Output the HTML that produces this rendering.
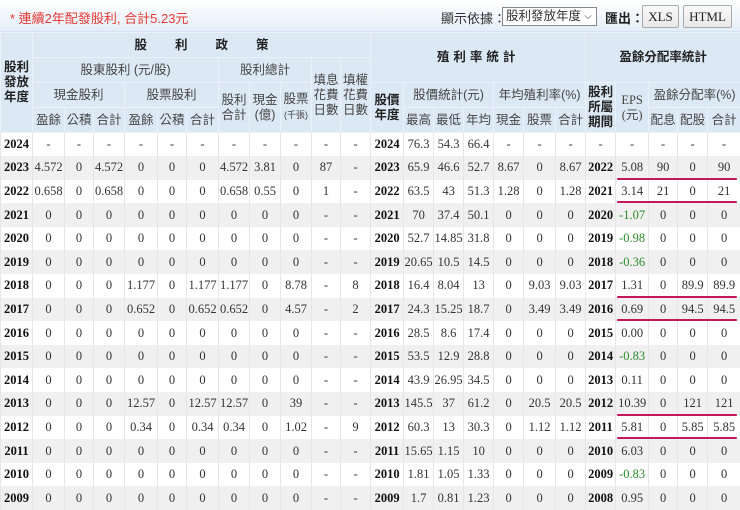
<!DOCTYPE html>
<html><head><meta charset="utf-8">
<style>
*{margin:0;padding:0;box-sizing:border-box}
body{width:740px;height:509px;overflow:hidden;background:#fff;font-family:"Liberation Serif","Noto Sans CJK TC",serif;position:relative}
.top{position:absolute;left:0;top:0;width:740px;height:32px;background:linear-gradient(#ffffff,#e4eef8);border-bottom:1px solid #d5e3f0}
.note{position:absolute;left:10px;top:8px;font-size:13px;color:#e53935;font-family:"Liberation Sans","Noto Sans CJK TC",sans-serif}
.lbl{position:absolute;top:8px;font-size:13px;color:#333;font-family:"Liberation Sans","Noto Sans CJK TC",sans-serif}
.sel{position:absolute;left:502px;top:7px;width:95px;height:19px;border:1px solid #888;background:#fff;font-size:12.5px;line-height:17px;padding-left:3px;color:#333;font-family:"Liberation Sans","Noto Sans CJK TC",sans-serif;white-space:nowrap;overflow:hidden}
.sel span{position:absolute;right:4px;top:0;font-size:10px}
.btn{position:absolute;top:5px;height:23px;border:1px solid #aaa;border-radius:2px;background:linear-gradient(#fafafa,#e8e8e8);font-size:13px;line-height:21px;text-align:center;color:#222}
table{position:absolute;left:0;top:32px;border-collapse:collapse;table-layout:fixed;width:740px}
th{background:#dce9f5;border:1px solid #e9f1f9;font-weight:normal;font-size:12.5px;color:#444;font-family:"Liberation Sans","Noto Sans CJK TC",sans-serif;line-height:15px;padding:0;height:25px}
th.b{font-weight:bold;color:#222}
td{border-left:1px solid #e6e6e6;border-right:1px solid #e6e6e6;text-align:center;font-size:12.5px;color:#333;height:23.6px;padding:0;white-space:nowrap}
td.y{font-weight:bold;color:#111}
tr.g td{background:#f0f0f0}
.n{color:#2e8b2e}
.ul{position:absolute;left:617px;width:120px;height:2px;background:#c2185b;border-radius:1px}
</style></head><body>
<div class="top"></div>
<div class="note">* 連續2年配發股利, 合計5.23元</div>
<div class="lbl" style="left:441px">顯示依據：</div>
<div class="sel">股利發放年度<span>⌵</span></div>
<div class="lbl" style="left:605px;font-weight:bold;color:#222">匯出：</div>
<div class="btn" style="left:642px;width:37px">XLS</div>
<div class="btn" style="left:683px;width:49px">HTML</div>
<table>
<colgroup>
<col style="width:32px"><col style="width:32px"><col style="width:29px"><col style="width:31px"><col style="width:33px"><col style="width:29px"><col style="width:32px"><col style="width:31px"><col style="width:31px"><col style="width:31px"><col style="width:29px"><col style="width:30px">
<col style="width:33px"><col style="width:30px"><col style="width:30px"><col style="width:30px"><col style="width:30px"><col style="width:32px"><col style="width:30px"><col style="width:30px"><col style="width:33px"><col style="width:29px"><col style="width:30px"><col style="width:33px">
</colgroup>
<tr><th class="b" rowspan="4">股利<br>發放<br>年度</th><th class="b" colspan="11" style="letter-spacing:28px;padding-left:28px">股利政策</th><th class="b" colspan="7" rowspan="2" style="letter-spacing:4px">殖利率統計</th><th class="b" colspan="5" rowspan="2">盈餘分配率統計</th></tr>
<tr><th colspan="6">股東股利 (元/股)</th><th colspan="3">股利總計</th><th rowspan="3">填息<br>花費<br>日數</th><th rowspan="3">填權<br>花費<br>日數</th></tr>
<tr><th colspan="3">現金股利</th><th colspan="3">股票股利</th><th rowspan="2">股利<br>合計</th><th rowspan="2">現金<br>(億)</th><th rowspan="2">股票<br><span style="font-size:9px">(千張)</span></th><th class="b" rowspan="2">股價<br>年度</th><th colspan="3">股價統計(元)</th><th colspan="3">年均殖利率(%)</th><th class="b" rowspan="2">股利<br>所屬<br>期間</th><th rowspan="2" style="font-family:'Liberation Serif','Noto Sans CJK TC',serif">EPS<br>(元)</th><th colspan="3">盈餘分配率(%)</th></tr>
<tr><th>盈餘</th><th>公積</th><th>合計</th><th>盈餘</th><th>公積</th><th>合計</th><th>最高</th><th>最低</th><th>年均</th><th>現金</th><th>股票</th><th>合計</th><th>配息</th><th>配股</th><th>合計</th></tr>
<tr><td class="y">2024</td><td>-</td><td>-</td><td>-</td><td>-</td><td>-</td><td>-</td><td>-</td><td>-</td><td>-</td><td>-</td><td>-</td><td class="y">2024</td><td>76.3</td><td>54.3</td><td>66.4</td><td>-</td><td>-</td><td>-</td><td>-</td><td>-</td><td>-</td><td>-</td><td>-</td></tr>
<tr class="g"><td class="y">2023</td><td>4.572</td><td>0</td><td>4.572</td><td>0</td><td>0</td><td>0</td><td>4.572</td><td>3.81</td><td>0</td><td>87</td><td>-</td><td class="y">2023</td><td>65.9</td><td>46.6</td><td>52.7</td><td>8.67</td><td>0</td><td>8.67</td><td class="y">2022</td><td>5.08</td><td>90</td><td>0</td><td>90</td></tr>
<tr><td class="y">2022</td><td>0.658</td><td>0</td><td>0.658</td><td>0</td><td>0</td><td>0</td><td>0.658</td><td>0.55</td><td>0</td><td>1</td><td>-</td><td class="y">2022</td><td>63.5</td><td>43</td><td>51.3</td><td>1.28</td><td>0</td><td>1.28</td><td class="y">2021</td><td>3.14</td><td>21</td><td>0</td><td>21</td></tr>
<tr class="g"><td class="y">2021</td><td>0</td><td>0</td><td>0</td><td>0</td><td>0</td><td>0</td><td>0</td><td>0</td><td>0</td><td>-</td><td>-</td><td class="y">2021</td><td>70</td><td>37.4</td><td>50.1</td><td>0</td><td>0</td><td>0</td><td class="y">2020</td><td class="n">-1.07</td><td>0</td><td>0</td><td>0</td></tr>
<tr><td class="y">2020</td><td>0</td><td>0</td><td>0</td><td>0</td><td>0</td><td>0</td><td>0</td><td>0</td><td>0</td><td>-</td><td>-</td><td class="y">2020</td><td>52.7</td><td>14.85</td><td>31.8</td><td>0</td><td>0</td><td>0</td><td class="y">2019</td><td class="n">-0.98</td><td>0</td><td>0</td><td>0</td></tr>
<tr class="g"><td class="y">2019</td><td>0</td><td>0</td><td>0</td><td>0</td><td>0</td><td>0</td><td>0</td><td>0</td><td>0</td><td>-</td><td>-</td><td class="y">2019</td><td>20.65</td><td>10.5</td><td>14.5</td><td>0</td><td>0</td><td>0</td><td class="y">2018</td><td class="n">-0.36</td><td>0</td><td>0</td><td>0</td></tr>
<tr><td class="y">2018</td><td>0</td><td>0</td><td>0</td><td>1.177</td><td>0</td><td>1.177</td><td>1.177</td><td>0</td><td>8.78</td><td>-</td><td>8</td><td class="y">2018</td><td>16.4</td><td>8.04</td><td>13</td><td>0</td><td>9.03</td><td>9.03</td><td class="y">2017</td><td>1.31</td><td>0</td><td>89.9</td><td>89.9</td></tr>
<tr class="g"><td class="y">2017</td><td>0</td><td>0</td><td>0</td><td>0.652</td><td>0</td><td>0.652</td><td>0.652</td><td>0</td><td>4.57</td><td>-</td><td>2</td><td class="y">2017</td><td>24.3</td><td>15.25</td><td>18.7</td><td>0</td><td>3.49</td><td>3.49</td><td class="y">2016</td><td>0.69</td><td>0</td><td>94.5</td><td>94.5</td></tr>
<tr><td class="y">2016</td><td>0</td><td>0</td><td>0</td><td>0</td><td>0</td><td>0</td><td>0</td><td>0</td><td>0</td><td>-</td><td>-</td><td class="y">2016</td><td>28.5</td><td>8.6</td><td>17.4</td><td>0</td><td>0</td><td>0</td><td class="y">2015</td><td>0.00</td><td>0</td><td>0</td><td>0</td></tr>
<tr class="g"><td class="y">2015</td><td>0</td><td>0</td><td>0</td><td>0</td><td>0</td><td>0</td><td>0</td><td>0</td><td>0</td><td>-</td><td>-</td><td class="y">2015</td><td>53.5</td><td>12.9</td><td>28.8</td><td>0</td><td>0</td><td>0</td><td class="y">2014</td><td class="n">-0.83</td><td>0</td><td>0</td><td>0</td></tr>
<tr><td class="y">2014</td><td>0</td><td>0</td><td>0</td><td>0</td><td>0</td><td>0</td><td>0</td><td>0</td><td>0</td><td>-</td><td>-</td><td class="y">2014</td><td>43.9</td><td>26.95</td><td>34.5</td><td>0</td><td>0</td><td>0</td><td class="y">2013</td><td>0.11</td><td>0</td><td>0</td><td>0</td></tr>
<tr class="g"><td class="y">2013</td><td>0</td><td>0</td><td>0</td><td>12.57</td><td>0</td><td>12.57</td><td>12.57</td><td>0</td><td>39</td><td>-</td><td>-</td><td class="y">2013</td><td>145.5</td><td>37</td><td>61.2</td><td>0</td><td>20.5</td><td>20.5</td><td class="y">2012</td><td>10.39</td><td>0</td><td>121</td><td>121</td></tr>
<tr><td class="y">2012</td><td>0</td><td>0</td><td>0</td><td>0.34</td><td>0</td><td>0.34</td><td>0.34</td><td>0</td><td>1.02</td><td>-</td><td>9</td><td class="y">2012</td><td>60.3</td><td>13</td><td>30.3</td><td>0</td><td>1.12</td><td>1.12</td><td class="y">2011</td><td>5.81</td><td>0</td><td>5.85</td><td>5.85</td></tr>
<tr class="g"><td class="y">2011</td><td>0</td><td>0</td><td>0</td><td>0</td><td>0</td><td>0</td><td>0</td><td>0</td><td>0</td><td>-</td><td>-</td><td class="y">2011</td><td>15.65</td><td>1.15</td><td>10</td><td>0</td><td>0</td><td>0</td><td class="y">2010</td><td>6.03</td><td>0</td><td>0</td><td>0</td></tr>
<tr><td class="y">2010</td><td>0</td><td>0</td><td>0</td><td>0</td><td>0</td><td>0</td><td>0</td><td>0</td><td>0</td><td>-</td><td>-</td><td class="y">2010</td><td>1.81</td><td>1.05</td><td>1.33</td><td>0</td><td>0</td><td>0</td><td class="y">2009</td><td class="n">-0.83</td><td>0</td><td>0</td><td>0</td></tr>
<tr class="g"><td class="y">2009</td><td>0</td><td>0</td><td>0</td><td>0</td><td>0</td><td>0</td><td>0</td><td>0</td><td>0</td><td>-</td><td>-</td><td class="y">2009</td><td>1.7</td><td>0.81</td><td>1.23</td><td>0</td><td>0</td><td>0</td><td class="y">2008</td><td>0.95</td><td>0</td><td>0</td><td>0</td></tr>
</table>
<div class="ul" style="top:178px"></div>
<div class="ul" style="top:201px"></div>
<div class="ul" style="top:296px"></div>
<div class="ul" style="top:319px"></div>
<div class="ul" style="top:414px"></div>
<div class="ul" style="top:437px"></div>
</body></html>
